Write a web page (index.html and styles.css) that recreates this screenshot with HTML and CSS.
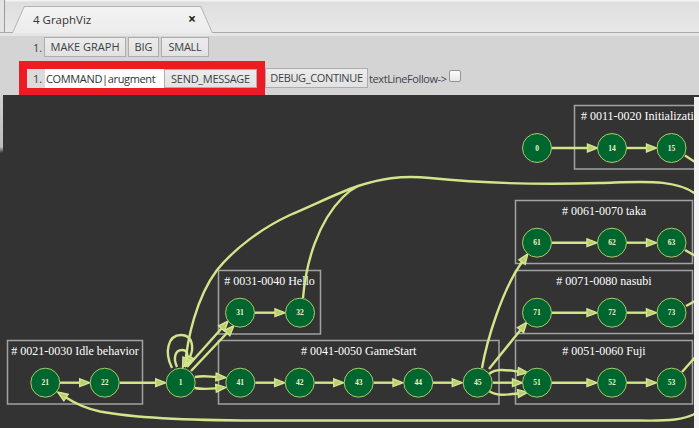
FILE: index.html
```html
<!DOCTYPE html>
<html>
<head>
<meta charset="utf-8">
<title>GraphViz</title>
<link rel="stylesheet" href="styles.css">
</head>
<body>
<div class="app">
  <div class="tabbar">
    <div class="tab">
      <span class="tab-title">4 GraphViz</span>
      <span class="tab-close">×</span>
    </div>
  </div>
  <div class="panel">
    <div class="row row1">
      <span class="num">1.</span>
      <button class="btn w-make">MAKE GRAPH</button>
      <button class="btn w-big">BIG</button>
      <button class="btn w-small">SMALL</button>
    </div>
    <div class="row row2">
      <div class="hl">
        <span class="num box">1.</span>
        <input class="cmd" type="text" value="COMMAND|arugment">
        <button class="btn send">SEND_MESSAGE</button>
      </div>
      <button class="btn debug">DEBUG_CONTINUE</button>
      <span class="follow">textLineFollow-&gt;</span>
      <span class="check"></span>
    </div>
  </div>
  <div class="graphwrap">
    <div class="lstrip"></div>
    <svg class="graph" width="691" height="333" viewBox="3 95 691 333" xmlns="http://www.w3.org/2000/svg">
      <defs>
        <marker id="ah" markerUnits="userSpaceOnUse" markerWidth="12" markerHeight="10" refX="0" refY="4.5" orient="auto" overflow="visible">
          <path class="ahp" d="M0,0.6 L10,4.5 L0,8.4 Z"/>
        </marker>
      </defs>
      <g class="clusters">
        <rect x="574.5" y="105.5" width="200" height="63.5"/>
        <rect x="515.5" y="200.5" width="177" height="63"/>
        <rect x="515.5" y="270.5" width="177" height="63"/>
        <rect x="515.5" y="340.5" width="177" height="63.5"/>
        <rect x="218.5" y="340.5" width="280.5" height="63.5"/>
        <rect x="218.5" y="270.5" width="102" height="63.5"/>
        <rect x="7.5" y="340.5" width="135" height="63.5"/>
      </g>
      <g class="ctitles">
        <text class="start" x="581" y="120">#&#160;0011-0020 Initialization</text>
        <text x="604" y="214.5">#&#160;0061-0070 taka</text>
        <text x="604" y="284.5">#&#160;0071-0080 nasubi</text>
        <text x="604" y="354.5">#&#160;0051-0060 Fuji</text>
        <text x="358.7" y="354.5">#&#160;0041-0050 GameStart</text>
        <text x="269.5" y="284.5">#&#160;0031-0040 Hello</text>
        <text x="75" y="354.5">#&#160;0021-0030 Idle behavior</text>
      </g>
      <g class="edges">
        <path class="a" d="M552,148 H587.5"/>
        <path class="a" d="M627,148 H646.5"/>
        <path class="a" d="M552,242.7 H587"/>
        <path class="a" d="M627,242.7 H646.5"/>
        <path class="a" d="M552,312.7 H587"/>
        <path class="a" d="M627,312.7 H646.5"/>
        <path class="a" d="M552,382.7 H587"/>
        <path class="a" d="M627,382.7 H646.5"/>
        <path class="a" d="M60,382.7 H79.7"/>
        <path class="a" d="M119.7,382.7 H155.7"/>
        <path class="a" d="M255.3,382.7 H274.7"/>
        <path class="a" d="M314.7,382.7 H333.7"/>
        <path class="a" d="M373.7,382.7 H393"/>
        <path class="a" d="M433,382.7 H452.3"/>
        <path class="a" d="M255,312.7 H275"/>
        <path class="a" d="M195,377 C203,375.5 208,376.5 216,377"/>
        <path class="a" d="M194.5,388 C203,389.5 208,389 216,388.3"/>
        <path class="a" d="M187,367 L221.5,328.5"/>
        <path class="a" d="M191,371 L227,333"/>
        <path class="a" d="M172,368 C164,352 168,335 181,335 C193,335 194,348 190,357"/>
        <path class="a" d="M177,367 C173,358 175,350 182,350 C188,350 188,355 186.5,358.5"/>
        <path d="M185,367 C187,340 196,298 217,270 C235,248 262,228 290,215 C318,203 340,192 358,186 C380,179 400,175 430,178 C480,183 540,185 600,183 C640,182 678,178 698,196"/>
        <path d="M303,298 C306,262 318,222 343,197 C348,192 352,189 358,186"/>
        <path class="a" d="M489,374 C496,368 506,370 518,371.5"/>
        <path class="a" d="M493,382.7 H512.5"/>
        <path class="a" d="M489,391 C496,396 506,395 518,393.5"/>
        <path class="a" d="M482,368 C487,340 502,290 522,262"/>
        <path class="a" d="M489,369 L520.5,330"/>
        <path d="M682,372 L698,354"/>
        <path d="M685,250 L698,257.5"/>
        <path d="M686,306 L698,299.5"/>
        <path d="M685,155.5 L698,164"/>
        <path class="a" d="M698,412 C686,420 668,421 640,420.5 L260,420.5 C200,420.5 140,419 100,411.5 C86,408.5 76,404 66,397.5"/>
      </g>
      <g class="nodes">
        <circle cx="537" cy="148" r="14.5"/>
        <circle cx="612" cy="148" r="14.5"/>
        <circle cx="671.5" cy="148" r="14.5"/>
        <circle cx="537" cy="242.7" r="14.5"/>
        <circle cx="612" cy="242.7" r="14.5"/>
        <circle cx="671.5" cy="242.7" r="14.5"/>
        <circle cx="537" cy="312.7" r="14.5"/>
        <circle cx="612" cy="312.7" r="14.5"/>
        <circle cx="671.5" cy="312.7" r="14.5"/>
        <circle cx="537" cy="382.7" r="14.5"/>
        <circle cx="612" cy="382.7" r="14.5"/>
        <circle cx="671.5" cy="382.7" r="14.5"/>
        <circle cx="240.3" cy="382.7" r="14.5"/>
        <circle cx="299.7" cy="382.7" r="14.5"/>
        <circle cx="358.7" cy="382.7" r="14.5"/>
        <circle cx="418.3" cy="382.7" r="14.5"/>
        <circle cx="477.7" cy="382.7" r="14.5"/>
        <circle cx="240" cy="312.7" r="14.5"/>
        <circle cx="300" cy="312.7" r="14.5"/>
        <circle cx="45.3" cy="382.7" r="14.5"/>
        <circle cx="104.7" cy="382.7" r="14.5"/>
        <circle cx="180.7" cy="382.7" r="14.5"/>
      </g>
      <g class="nlabels">
        <text x="537" y="150.5">0</text>
        <text x="612" y="150.5">14</text>
        <text x="671.5" y="150.5">15</text>
        <text x="537" y="245.2">61</text>
        <text x="612" y="245.2">62</text>
        <text x="671.5" y="245.2">63</text>
        <text x="537" y="315.2">71</text>
        <text x="612" y="315.2">72</text>
        <text x="671.5" y="315.2">73</text>
        <text x="537" y="385.2">51</text>
        <text x="612" y="385.2">52</text>
        <text x="671.5" y="385.2">53</text>
        <text x="240.3" y="385.2">41</text>
        <text x="299.7" y="385.2">42</text>
        <text x="358.7" y="385.2">43</text>
        <text x="418.3" y="385.2">44</text>
        <text x="477.7" y="385.2">45</text>
        <text x="240" y="315.2">31</text>
        <text x="300" y="315.2">32</text>
        <text x="45.3" y="385.2">21</text>
        <text x="104.7" y="385.2">22</text>
        <text x="180.7" y="385.2">1</text>
      </g>
    </svg>
    <div class="rstrip"></div>
  </div>
</div>
</body>
</html>
```

FILE: styles.css
```css
* { box-sizing: border-box; }
html, body { margin: 0; padding: 0; }
body {
  width: 699px;
  height: 428px;
  overflow: hidden;
  background: #d4d4d4;
  font-family: "Open Sans", "Noto Sans", sans-serif;
  font-size: 11px;
  color: #3a3f47;
}
.app { display: flex; flex-direction: column; height: 428px; }

/* tab bar */
.tabbar {
  height: 33px;
  display: flex;
  align-items: flex-end;
  background: linear-gradient(#f2f2f2 0, #f2f2f2 1px, #dedede 2px, #e8e8e8 31px);
  border-bottom: 1px solid #a8a8a8;
  box-shadow: inset 4px 0 0 #e4e4e4, inset 5px 0 0 #9a9a9a;
}
.tab {
  position: relative;
  z-index: 1;
  width: 201px;
  height: 27px;
  margin: 0 0 -1px 12px;
  padding: 0 17px 1px 21px;
  display: flex;
  align-items: center;
}
.tab::before, .tab::after {
  content: "";
  position: absolute;
  z-index: -1;
}
.tab::before {
  inset: 0;
  background: #b4b4b4;
  clip-path: polygon(0 100%, 12px 0, calc(100% - 12px) 0, 100% 100%);
}
.tab::after {
  inset: 1px 1px 0 1px;
  background: linear-gradient(#f3f3f3, #ececec);
  clip-path: polygon(0 100%, 11.6px 0, calc(100% - 11.6px) 0, 100% 100%);
}
.tab-title { flex: 1; font-size: 11.5px; color: #333; }
.tab-close { font-weight: bold; font-size: 14px; color: #222; line-height: 1; }

/* panel */
.panel {
  height: 62px;
  border-top: 3px solid #e6e6e6;
  padding-top: 1px;
}
.row { display: flex; align-items: center; }
.row1 { height: 20px; padding-left: 33px; gap: 2px; }
.row2 { height: 34px; margin-top: 4px; padding-left: 19px; }
.num { width: 9px; color: #3d3d3d; }
.btn {
  height: 20px;
  padding: 0;
  margin: 0;
  border: 1px solid #adadad;
  background: linear-gradient(#ececec, #e2e2e2);
  font-family: inherit;
  font-size: 11px;
  color: #3a3f47;
  line-height: 18px;
  text-align: center;
  white-space: nowrap;
}
.w-make { width: 82px; }
.w-big { width: 31px; }
.w-small { width: 48px; letter-spacing: -0.3px; }
.hl {
  display: flex;
  align-items: center;
  background: #ed1c24;
  padding: 8px 8px 7px 8px;
}
.num.box {
  width: 18px;
  height: 19px;
  background: #dbdbdb;
  padding-left: 6px;
  line-height: 19px;
}
.cmd {
  width: 119px;
  height: 19px;
  border: none;
  padding: 0 1px;
  margin: 0;
  background: #fff;
  font-family: inherit;
  font-size: 11px;
  letter-spacing: -0.35px;
  color: #333;
  outline: none;
}
.btn.send { height: 19px; width: 93px; letter-spacing: -0.3px; }
.btn.debug { width: 103px; letter-spacing: -0.35px; }
.follow { margin-left: 1px; color: #3e4450; letter-spacing: -0.4px; }
.check {
  align-self: flex-start;
  margin-top: 9px;
  margin-left: 2px;
  width: 12px;
  height: 12px;
  border: 1px solid #939393;
  border-radius: 2px;
  background: linear-gradient(#fdfdfd, #e6e6e6);
}

/* graph */
.graphwrap {
  display: flex;
  height: 333px;
  background: #333333;
}
.lstrip {
  width: 3px;
  background: linear-gradient(#d2d2d2, #bcbcbc 52px, #333 58px);
}
.graph { display: block; flex: none; }
.rstrip { flex: 1; margin-top: 2px; background: #f4f4f4; }

.graph .clusters rect { fill: none; stroke: #a2a2a2; stroke-width: 1.5; }
.graph .ctitles text {
  fill: #ffffff;
  font-family: "Liberation Serif", "DejaVu Serif", serif;
  font-size: 12px;
  text-anchor: middle;
}
.graph .ctitles text.start { text-anchor: start; }
.graph .edges path { fill: none; stroke: #d2e58b; stroke-width: 2.4; }
.graph .edges path.a { marker-end: url(#ah); }
.graph .ahp { fill: #b9ce70; stroke: #d4e78f; stroke-width: 1.4; stroke-linejoin: miter; }
.graph .nodes circle { fill: #00662f; stroke: #aacb66; stroke-width: 1; }
.graph .nlabels text {
  fill: #f4f4c6;
  font-family: "Liberation Serif", "DejaVu Serif", serif;
  font-size: 7.5px;
  font-weight: bold;
  text-anchor: middle;
}
```
